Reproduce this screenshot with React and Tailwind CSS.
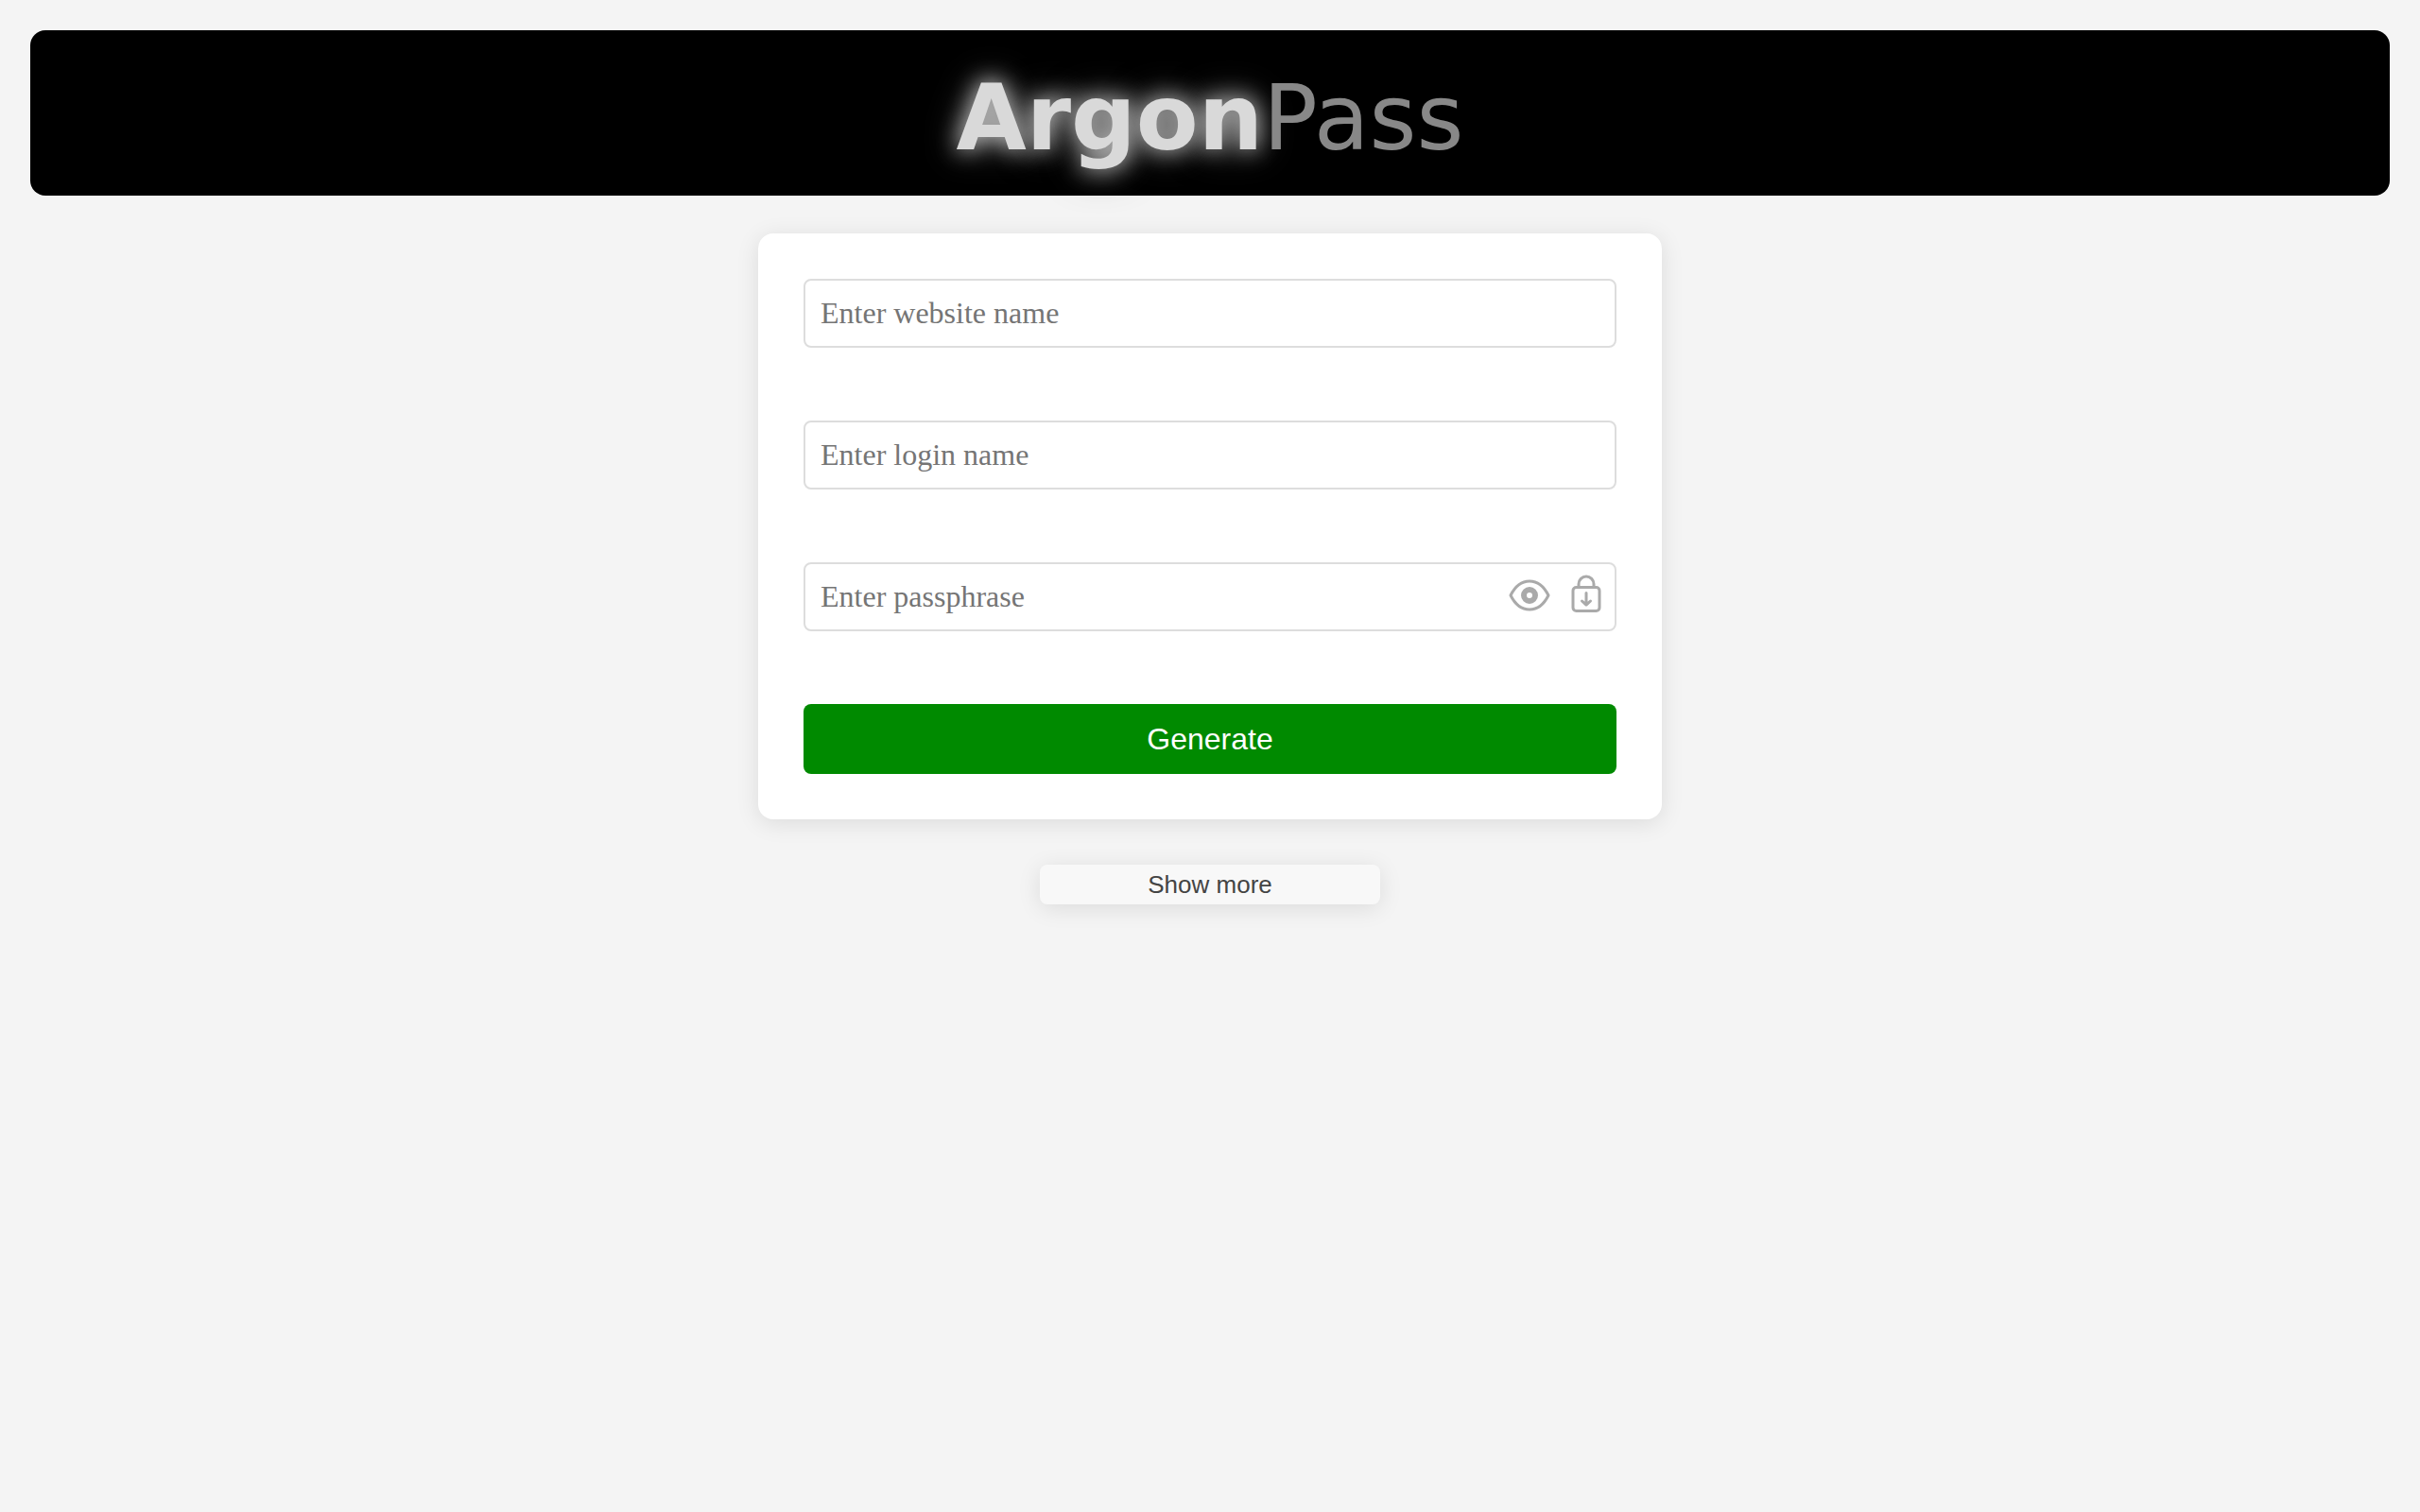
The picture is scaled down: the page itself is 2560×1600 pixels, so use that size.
import { useState } from 'react';
import { clsx } from 'clsx';

const inputClasses =
  "block h-[73px] w-full rounded-lg border-2 border-[#ddd] bg-white px-4 font-['Liberation_Serif',serif] text-[32px] text-black outline-none placeholder:text-[#757575]";

function EyeIcon() {
  return (
    <svg viewBox="0 0 48 48" className="size-12" fill="none" stroke="#aaa" strokeWidth="3" strokeLinejoin="round">
      <path d="M4 24C9 14 16 9 24 9S39 14 44 24C39 34 32 39 24 39S9 34 4 24Z" />
      <circle cx="24" cy="24" r="6" strokeWidth="6" />
    </svg>
  );
}

function LockIcon() {
  return (
    <svg viewBox="0 0 48 48" className="size-12" fill="none" stroke="#aaa" strokeWidth="3" strokeLinecap="round" strokeLinejoin="round">
      <rect x="10" y="15.500" width="28" height="25" rx="3.500" />
      <path d="M16 15V12a8 8 0 0 1 16 0v3" />
      <path d="M24 21.500v12.500M19.500 30l4.500 4.200 4.500-4.200" />
    </svg>
  );
}

export default function App() {
  const [showPassphrase, setShowPassphrase] = useState(false);
  const [locked, setLocked] = useState(false);

  return (
    <div className="min-h-screen bg-[#f4f4f4] p-8 font-['Liberation_Sans',sans-serif]">
      {/* Header */}
      <header className="rounded-2xl bg-black pt-[38px] pb-[26px] text-center">
        <h1 className="font-['DejaVu_Sans',sans-serif] text-[96px] leading-[111px] text-[#888]">
          <span className="font-bold text-[#d9d9d9] [text-shadow:0_0_24px_#d9d9d9,0_0_40px_#555]">Argon</span>
          <span>Pass</span>
        </h1>
      </header>

      <main className="mt-10 flex flex-col items-center gap-12">
        {/* Generator form */}
        <form
          onSubmit={(e) => e.preventDefault()}
          className="flex w-full max-w-[956px] flex-col gap-[77px] rounded-2xl bg-white p-12 shadow-[0_4px_24px_rgba(0,0,0,0.1)]"
        >
          <input type="text" aria-label="Website name" placeholder="Enter website name" className={inputClasses} />
          <input type="text" aria-label="Login name" placeholder="Enter login name" className={inputClasses} />
          <div className="relative">
            <input
              type={showPassphrase ? 'text' : 'password'}
              aria-label="Passphrase"
              placeholder="Enter passphrase"
              readOnly={locked}
              className={clsx(inputClasses, 'pr-36')}
            />
            <div className="absolute inset-y-0 right-2 flex items-center gap-3 pb-1">
              <button type="button" aria-label="Show passphrase" onClick={() => setShowPassphrase(!showPassphrase)}>
                <EyeIcon />
              </button>
              <button type="button" aria-label="Lock passphrase" onClick={() => setLocked(!locked)}>
                <LockIcon />
              </button>
            </div>
          </div>
          <button type="submit" className="h-[74px] rounded-lg bg-[#008a00] text-[32px] text-white">
            Generate
          </button>
        </form>

        <button
          type="button"
          className="h-[42px] w-[360px] rounded-lg bg-[#f8f8f8] text-[26px] leading-none text-[#444] shadow-[0_4px_24px_rgba(0,0,0,0.1)]"
        >
          Show more
        </button>
      </main>
    </div>
  );
}
